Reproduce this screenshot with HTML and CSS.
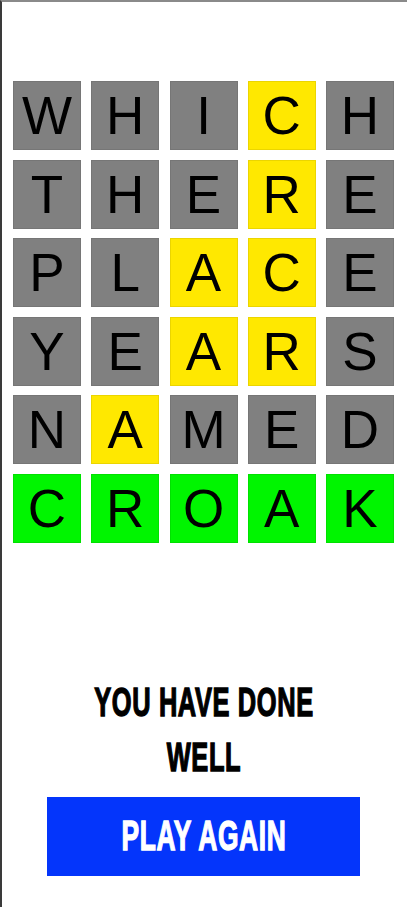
FILE: index.html
```html
<!DOCTYPE html>
<html>
<head>
<meta charset="utf-8">
<link rel="stylesheet" href="styles.css">
</head>
<body>
<div class="app">
  <div class="board">
    <div class="tile gray">W</div><div class="tile gray">H</div><div class="tile gray">I</div><div class="tile yellow">C</div><div class="tile gray">H</div>
    <div class="tile gray">T</div><div class="tile gray">H</div><div class="tile gray">E</div><div class="tile yellow">R</div><div class="tile gray">E</div>
    <div class="tile gray">P</div><div class="tile gray">L</div><div class="tile yellow">A</div><div class="tile yellow">C</div><div class="tile gray">E</div>
    <div class="tile gray">Y</div><div class="tile gray">E</div><div class="tile yellow">A</div><div class="tile yellow">R</div><div class="tile gray">S</div>
    <div class="tile gray">N</div><div class="tile yellow">A</div><div class="tile gray">M</div><div class="tile gray">E</div><div class="tile gray">D</div>
    <div class="tile green">C</div><div class="tile green">R</div><div class="tile green">O</div><div class="tile green">A</div><div class="tile green">K</div>
  </div>
  <div class="result">
    <h1 class="message"><span class="squeeze">YOU HAVE DONE<br>WELL</span></h1>
    <button class="again"><span class="squeeze">PLAY AGAIN</span></button>
  </div>
</div>
</body>
</html>
```
FILE: styles.css
```css
html, body {
  margin: 0;
  padding: 0;
  background: #fff;
}
body {
  height: 907px;
  box-sizing: border-box;
  border-top: 2px solid #8a8a8a;
  border-left: 2px solid #3a3a3a;
  font-family: "Liberation Sans", Arial, sans-serif;
  overflow: hidden;
}
.app {
  display: flex;
  flex-direction: column;
  align-items: center;
  padding-top: 79px;
  padding-right: 2px;
}
.board {
  display: grid;
  grid-template-columns: repeat(5, 68px);
  grid-auto-rows: 69px;
  column-gap: 10.25px;
  row-gap: 9.6px;
}
.tile {
  box-sizing: border-box;
  border: 1px solid rgba(0,0,0,0.08);
  display: flex;
  align-items: center;
  justify-content: center;
  font-size: 53px;
  color: #000;
  line-height: 1;
}
.gray { background: #808080; }
.yellow { background: #ffe800; }
.green { background: #00f500; }
.result {
  display: flex;
  flex-direction: column;
  align-items: center;
  margin-top: 132px;
}
.squeeze {
  display: inline-block;
  transform: scaleX(0.62);
  -webkit-text-stroke: 1.4px currentColor;
  letter-spacing: 1px;
  white-space: nowrap;
}
.message {
  margin: 0;
  font-family: "Liberation Sans", sans-serif;
  font-weight: bold;
  font-size: 41px;
  line-height: 55px;
  text-align: center;
  color: #000;
}
.again {
  margin-top: 12px;
  width: 313px;
  height: 79px;
  border: none;
  background: #0435fb;
  color: #fff;
  font-family: "Liberation Sans", sans-serif;
  font-weight: bold;
  font-size: 42.5px;
  padding: 0;
}
```
